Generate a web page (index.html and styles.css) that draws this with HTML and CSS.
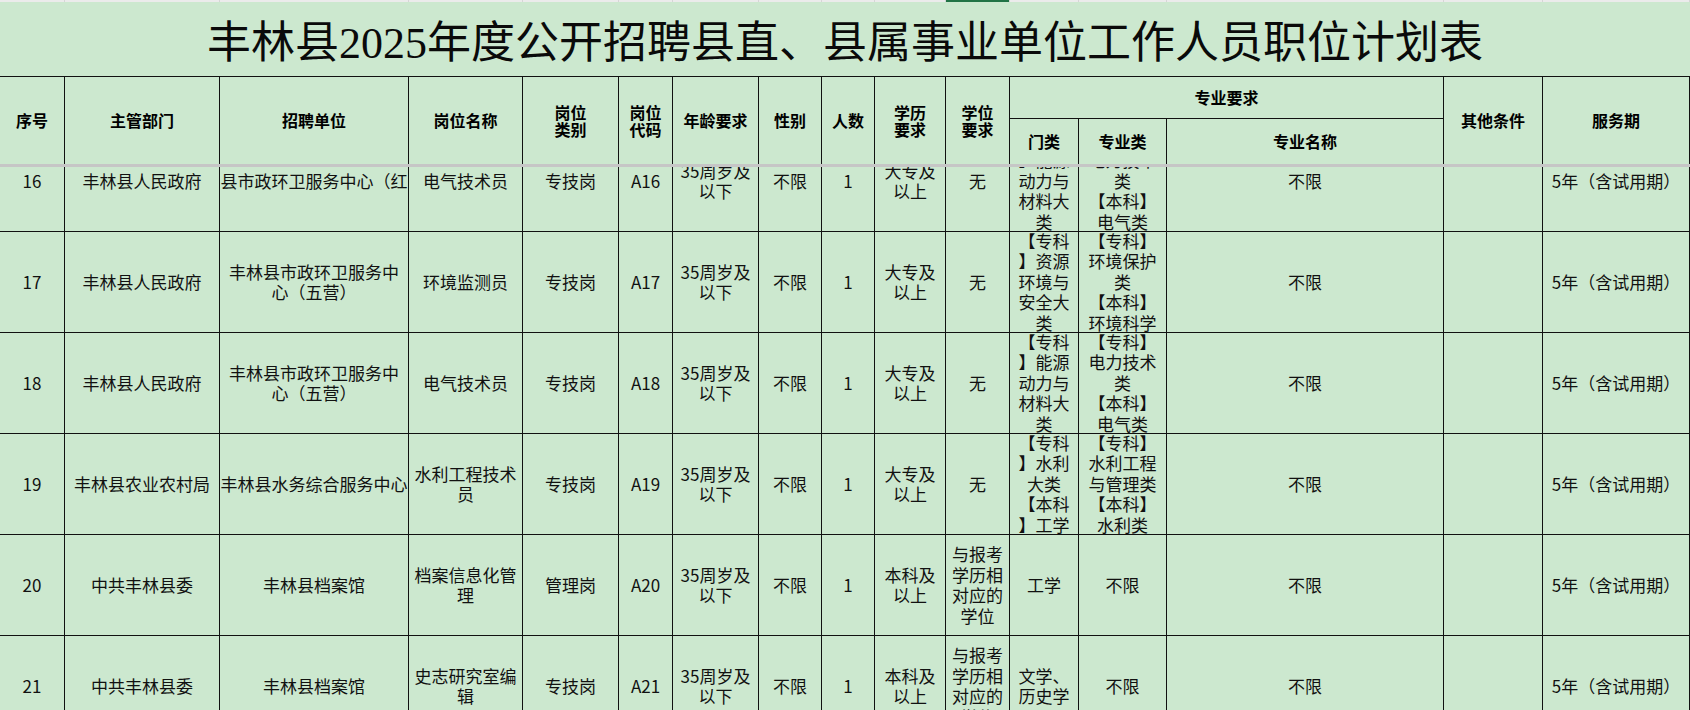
FILE: index.html
```html
<!DOCTYPE html>
<html lang="zh-CN">
<head>
<meta charset="utf-8">
<title>丰林县2025年度公开招聘县直、县属事业单位工作人员职位计划表</title>
<link rel="stylesheet" href="styles.css">
</head>
<body>
<div class="sheet">
  <table class="head">
    <colgroup>
      <col class="w1"><col class="w2"><col class="w3"><col class="w4"><col class="w5"><col class="w6"><col class="w7"><col class="w8"><col class="w9"><col class="w10"><col class="w11"><col class="w12"><col class="w13"><col class="w14"><col class="w15"><col class="w16">
    </colgroup>
    <tr class="strip">
      <td></td><td></td><td></td><td></td><td></td><td></td><td></td><td></td><td></td><td></td><td class="sel"></td><td></td><td></td><td></td><td></td><td></td>
    </tr>
    <tr>
      <td colspan="16" class="title"><div class="tt">丰林县<span class="num">2025</span>年度公开招聘县直、县属事业单位工作人员职位计划表</div></td>
    </tr>
    <tr class="ha">
      <td rowspan="2" class="hs">序号</td>
      <td rowspan="2" class="hs">主管部门</td>
      <td rowspan="2" class="hs">招聘单位</td>
      <td rowspan="2" class="hs">岗位名称</td>
      <td rowspan="2" class="hs">岗位<br>类别</td>
      <td rowspan="2" class="hs">岗位<br>代码</td>
      <td rowspan="2" class="hs">年龄要求</td>
      <td rowspan="2" class="hs">性别</td>
      <td rowspan="2" class="hs">人数</td>
      <td rowspan="2" class="hs">学历<br>要求</td>
      <td rowspan="2" class="hs">学位<br>要求</td>
      <td colspan="3"><div class="h1">专业要求</div></td>
      <td rowspan="2" class="hs">其他条件</td>
      <td rowspan="2" class="hs">服务期</td>
    </tr>
    <tr class="hb">
      <td class="hs"><div class="h2">门类</div></td>
      <td class="hs"><div class="h2">专业类</div></td>
      <td class="hs"><div class="h2">专业名称</div></td>
    </tr>
  </table>
  <div class="freeze"></div>
  <div class="viewport">
    <table class="body">
      <colgroup>
        <col class="w1"><col class="w2"><col class="w3"><col class="w4"><col class="w5"><col class="w6"><col class="w7"><col class="w8"><col class="w9"><col class="w10"><col class="w11"><col class="w12"><col class="w13"><col class="w14"><col class="w15"><col class="w16">
      </colgroup>
      <tr>
        <td><div class="c">16</div></td>
        <td><div class="c">丰林县人民政府</div></td>
        <td><div class="c nw">县市政环卫服务中心（红</div></td>
        <td><div class="c">电气技术员</div></td>
        <td><div class="c">专技岗</div></td>
        <td><div class="c">A16</div></td>
        <td><div class="c">35周岁及<br>以下</div></td>
        <td><div class="c">不限</div></td>
        <td><div class="c">1</div></td>
        <td><div class="c">大专及<br>以上</div></td>
        <td><div class="c">无</div></td>
        <td><div class="c">【专科<br>】能源<br>动力与<br>材料大<br>类</div></td>
        <td><div class="c">【专科】<br>电力技术<br>类<br>【本科】<br>电气类</div></td>
        <td><div class="c">不限</div></td>
        <td><div class="c"></div></td>
        <td><div class="c">5年（含试用期）</div></td>
      </tr>
      <tr>
        <td><div class="c">17</div></td>
        <td><div class="c">丰林县人民政府</div></td>
        <td><div class="c">丰林县市政环卫服务中<br>心（五营）</div></td>
        <td><div class="c">环境监测员</div></td>
        <td><div class="c">专技岗</div></td>
        <td><div class="c">A17</div></td>
        <td><div class="c">35周岁及<br>以下</div></td>
        <td><div class="c">不限</div></td>
        <td><div class="c">1</div></td>
        <td><div class="c">大专及<br>以上</div></td>
        <td><div class="c">无</div></td>
        <td><div class="c">【专科<br>】资源<br>环境与<br>安全大<br>类</div></td>
        <td><div class="c">【专科】<br>环境保护<br>类<br>【本科】<br>环境科学</div></td>
        <td><div class="c">不限</div></td>
        <td><div class="c"></div></td>
        <td><div class="c">5年（含试用期）</div></td>
      </tr>
      <tr>
        <td><div class="c">18</div></td>
        <td><div class="c">丰林县人民政府</div></td>
        <td><div class="c">丰林县市政环卫服务中<br>心（五营）</div></td>
        <td><div class="c">电气技术员</div></td>
        <td><div class="c">专技岗</div></td>
        <td><div class="c">A18</div></td>
        <td><div class="c">35周岁及<br>以下</div></td>
        <td><div class="c">不限</div></td>
        <td><div class="c">1</div></td>
        <td><div class="c">大专及<br>以上</div></td>
        <td><div class="c">无</div></td>
        <td><div class="c">【专科<br>】能源<br>动力与<br>材料大<br>类</div></td>
        <td><div class="c">【专科】<br>电力技术<br>类<br>【本科】<br>电气类</div></td>
        <td><div class="c">不限</div></td>
        <td><div class="c"></div></td>
        <td><div class="c">5年（含试用期）</div></td>
      </tr>
      <tr>
        <td><div class="c">19</div></td>
        <td><div class="c">丰林县农业农村局</div></td>
        <td><div class="c nw">丰林县水务综合服务中心</div></td>
        <td><div class="c">水利工程技术<br>员</div></td>
        <td><div class="c">专技岗</div></td>
        <td><div class="c">A19</div></td>
        <td><div class="c">35周岁及<br>以下</div></td>
        <td><div class="c">不限</div></td>
        <td><div class="c">1</div></td>
        <td><div class="c">大专及<br>以上</div></td>
        <td><div class="c">无</div></td>
        <td><div class="c">【专科<br>】水利<br>大类<br>【本科<br>】工学</div></td>
        <td><div class="c">【专科】<br>水利工程<br>与管理类<br>【本科】<br>水利类</div></td>
        <td><div class="c">不限</div></td>
        <td><div class="c"></div></td>
        <td><div class="c">5年（含试用期）</div></td>
      </tr>
      <tr>
        <td><div class="c">20</div></td>
        <td><div class="c">中共丰林县委</div></td>
        <td><div class="c">丰林县档案馆</div></td>
        <td><div class="c">档案信息化管<br>理</div></td>
        <td><div class="c">管理岗</div></td>
        <td><div class="c">A20</div></td>
        <td><div class="c">35周岁及<br>以下</div></td>
        <td><div class="c">不限</div></td>
        <td><div class="c">1</div></td>
        <td><div class="c">本科及<br>以上</div></td>
        <td><div class="c">与报考<br>学历相<br>对应的<br>学位</div></td>
        <td><div class="c">工学</div></td>
        <td><div class="c">不限</div></td>
        <td><div class="c">不限</div></td>
        <td><div class="c"></div></td>
        <td><div class="c">5年（含试用期）</div></td>
      </tr>
      <tr>
        <td><div class="c">21</div></td>
        <td><div class="c">中共丰林县委</div></td>
        <td><div class="c">丰林县档案馆</div></td>
        <td><div class="c">史志研究室编<br>辑</div></td>
        <td><div class="c">专技岗</div></td>
        <td><div class="c">A21</div></td>
        <td><div class="c">35周岁及<br>以下</div></td>
        <td><div class="c">不限</div></td>
        <td><div class="c">1</div></td>
        <td><div class="c">本科及<br>以上</div></td>
        <td><div class="c">与报考<br>学历相<br>对应的<br>学位</div></td>
        <td><div class="c">文学、<br>历史学</div></td>
        <td><div class="c">不限</div></td>
        <td><div class="c">不限</div></td>
        <td><div class="c"></div></td>
        <td><div class="c">5年（含试用期）</div></td>
      </tr>
    </table>
  </div>
</div>
</body>
</html>
```

FILE: styles.css
```css
* { box-sizing: border-box; }
html, body { margin: 0; padding: 0; }
body {
  width: 1690px;
  height: 710px;
  overflow: hidden;
  background: #cce8cf;
  color: #000;
  font-family: "Noto Sans CJK SC", sans-serif;
}
.sheet {
  display: flex;
  flex-direction: column;
  width: 1690px;
  height: 710px;
}
table {
  border-collapse: separate;
  border-spacing: 0;
  table-layout: fixed;
  width: 1690px;
  flex: none;
}
col.w1 { width: 65px; }
col.w2 { width: 155px; }
col.w3 { width: 189px; }
col.w4 { width: 114px; }
col.w5 { width: 96px; }
col.w6 { width: 54px; }
col.w7 { width: 86px; }
col.w8 { width: 63px; }
col.w9 { width: 53px; }
col.w10 { width: 71px; }
col.w11 { width: 64px; }
col.w12 { width: 69px; }
col.w13 { width: 88px; }
col.w14 { width: 277px; }
col.w15 { width: 99px; }
col.w16 { width: 147px; }

td {
  padding: 0;
  border-right: 1px solid #111;
  border-bottom: 1px solid #111;
  text-align: center;
  vertical-align: middle;
}

.strip td {
  height: 2px;
  font-size: 0;
  line-height: 0;
  background: #ebebeb;
  border-right: 1px solid #d6d6d6;
  border-bottom: 0;
}
.strip td.sel { background: #217346; }

.title { border-right: 0; }
.tt {
  height: 74px;
  display: flex;
  align-items: center;
  justify-content: center;
  padding-top: 9px;
  font-family: "Liberation Serif", "Noto Sans CJK SC", serif;
  font-size: 44px;
  line-height: 1;
  font-weight: 400;
  white-space: nowrap;
  color: #0a0a0a;
}
.tt .num { font-family: "Liberation Serif", serif; }

.ha td, .hb td {
  font-size: 16px;
  font-weight: 700;
  line-height: 17px;
}
.hs { border-bottom: 0; }
.h1 {
  height: 41px;
  display: flex;
  align-items: center;
  justify-content: center;
}
.h2 {
  height: 45px;
  display: flex;
  align-items: center;
  justify-content: center;
}

.freeze {
  flex: none;
  height: 3px;
  background: #c6c6c6;
}
.viewport {
  flex: 1;
  overflow: hidden;
}
.body { margin-top: -36px; }

.c {
  height: 100px;
  display: flex;
  align-items: center;
  justify-content: center;
  overflow: hidden;
  font-size: 17px;
  line-height: 20.5px;
  text-align: center;
  color: #111;
}
.nw { white-space: nowrap; }
```
